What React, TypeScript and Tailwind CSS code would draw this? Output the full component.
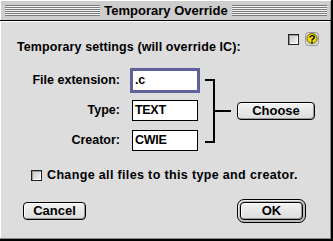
import React from 'react';

const font = "font-['Liberation_Sans',Arial,sans-serif]";

function Stripes() {
  return <div className="h-[11px] flex-1 bg-[repeating-linear-gradient(to_bottom,#7a7a7a_0_1px,#f4f4f4_1px_2px)]" />;
}

function CheckBox() {
  return <div className="h-[11px] w-[11px] border border-[#222] bg-[linear-gradient(135deg,#c8c8c8,#f4f4f4)] shadow-[inset_1px_1px_0_#999,inset_-1px_-1px_0_#fff]" />;
}

function HelpIcon() {
  return (
    <svg width="14" height="14" viewBox="0 0 14 14">
      <rect x="0.5" y="0.5" width="13" height="13" rx="3" fill="#d8d8d8" stroke="#9a9a9a" />
      <circle cx="7" cy="6.5" r="5" fill="#f6e000" stroke="#6b6300" strokeWidth="1" />
      <text x="7" y="10.5" textAnchor="middle" fontSize="11" fontWeight="bold" fontFamily="Liberation Sans, Arial, sans-serif" fill="#000">?</text>
    </svg>
  );
}

function Field({ value, focused }: { value: string; focused?: boolean }) {
  return (
    <div className={focused ? 'border-2 border-[#60609a]' : 'p-[2px]'}>
      <div className={`h-[21px] w-[66px] border bg-white pl-[2px] text-[12.5px] leading-[19px] font-bold tracking-[-0.3px] ${focused ? 'border-[#60609a]' : 'border-black'}`}>
        {value}
      </div>
    </div>
  );
}

function Button({ label, w }: { label: string; w: string }) {
  return (
    <div
      className={`${w} flex h-[18px] items-center justify-center rounded-[4px] border border-black bg-[linear-gradient(to_bottom,#f2f2f2,#dcdcdc)] text-[13px] font-bold shadow-[inset_1px_1px_0_#fff,inset_-1px_-1px_0_#999]`}
    >
      {label}
    </div>
  );
}

function Row({ label, children }: { label: string; children: React.ReactNode }) {
  return (
    <div className="flex items-center">
      <div className="w-[113px] pr-[10px] text-right text-[12.5px] font-bold">{label}</div>
      {children}
    </div>
  );
}

export default function App() {
  return (
    <div className={`${font} flex h-[241px] w-[333px] flex-col border-r-2 border-b-2 border-black bg-[#dddddd] text-black`}>
      {/* title bar */}
      <div className="flex h-[21px] shrink-0 items-center border-b border-black bg-[#cdcdcd] pl-[5px] pr-[4px] shadow-[inset_1px_1px_0_#fff,inset_-1px_0_0_#999]">
        <Stripes />
        <div className="px-[4px] text-[13px] leading-none font-bold">Temporary Override</div>
        <Stripes />
      </div>

      {/* body */}
      <div className="flex flex-1 flex-col border-r border-b border-[#8a8a8a] pl-[17px] shadow-[inset_1px_1px_0_#fff]">
        <div className="flex items-start pt-[11px]">
          <div className="mt-[8px] text-[12.5px] leading-[15px] font-bold tracking-[0.1px]">Temporary settings (will override IC):</div>
          <div className="ml-auto mr-[11px] flex items-center gap-[6px]">
            <CheckBox />
            <HelpIcon />
          </div>
        </div>

        <div className="mt-[13px] flex items-center">
          <div className="flex flex-col gap-[5px]">
            <Row label="File extension:">
              <Field value=".c" focused />
            </Row>
            <Row label="Type:">
              <Field value="TEXT" />
            </Row>
            <Row label="Creator:">
              <Field value="CWIE" />
            </Row>
          </div>
          <div className="ml-[5px] flex items-center">
            <div className="h-[64px] w-[10px] border-t-2 border-r-2 border-b-2 border-black" />
            <div className="h-[2px] w-[16px] bg-black" />
          </div>
          <div className="ml-[6px]">
            <Button label="Choose" w="w-[78px]" />
          </div>
        </div>

        <div className="mt-[15px] ml-[14px] flex items-center gap-[5px]">
          <CheckBox />
          <div className="text-[12.5px] leading-[15px] font-bold tracking-[0.35px]">Change all files to this type and creator.</div>
        </div>

        <div className="mt-[16px] ml-[6px] mr-[24px] flex items-center justify-between">
          <Button label="Cancel" w="w-[63px]" />
          <div className="rounded-[7px] border border-black bg-[#bbbbbb] p-[2px] shadow-[inset_1px_1px_0_#eee]">
            <Button label="OK" w="w-[63px]" />
          </div>
        </div>
      </div>
    </div>
  );
}
